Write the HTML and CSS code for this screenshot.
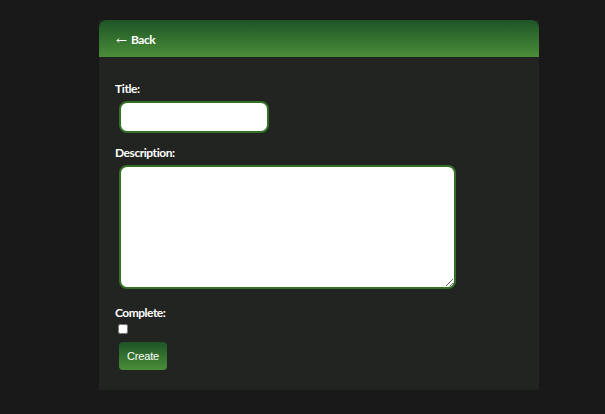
FILE: index.html
```html
<!DOCTYPE html>
<html lang="en">
<head>
<meta charset="utf-8">
<title>Create task</title>
<link rel="stylesheet" href="styles.css">
</head>
<body>
<main class="card">
  <header class="card-header"><a class="back" href="#"><svg class="arrow" viewBox="0 0 11 8"><path d="M1 4.5H10.5M3 2.5L1 4.5L3 6.5"/></svg><span class="back-text">Back</span></a></header>
  <form class="form">
    <label class="label label-title" for="title">Title:</label>
    <input class="field" id="title" type="text">
    <label class="label label-description" for="description">Description:</label>
    <textarea class="field area" id="description"></textarea>
    <label class="label label-complete" for="complete">Complete:</label>
    <input class="check" id="complete" type="checkbox">
    <button class="create" type="button">Create</button>
  </form>
</main>
</body>
</html>
```
FILE: styles.css
```css
* { box-sizing: border-box; }
body {
  margin: 0;
  padding-top: 20px;
  background: #191919;
  color: #fff;
  font: bold 12px/16px Lato, sans-serif;
}
.card {
  width: 440px;
  height: 370px;
  margin-left: 99px;
  background: #222421;
}
.card-header {
  height: 37px;
  padding: 12px 16px 0 17px;
  border-radius: 8px 8px 0 0;
  background: linear-gradient(#1e5426, #4a8e39);
}
.back {
  display: flex;
  align-items: center;
  gap: 4px;
  width: max-content;
  color: #fff;
  text-decoration: none;
}
.arrow {
  width: 11px;
  height: 8px;
  fill: none;
  stroke: #fff;
  stroke-width: 1;
}
.back-text { letter-spacing: -0.5px; }
.form {
  display: flex;
  flex-direction: column;
  align-items: flex-start;
  padding: 24px 16px 0;
}
.label { height: 16px; }
.label-title { letter-spacing: -0.4px; }
.label-description { margin-top: 12px; letter-spacing: -0.45px; }
.label-complete { margin-top: 16px; letter-spacing: -0.5px; }
.field {
  width: 150px;
  height: 32px;
  margin: 4px 4px 0;
  padding: 6px;
  border: 2px solid #357029;
  border-radius: 8px;
  outline: 0;
  background: #fff;
}
.area {
  width: 337px;
  height: 124px;
  resize: both;
}
.check {
  width: 10px;
  height: 10px;
  margin: 3px 3px 0;
}
.create {
  width: 48px;
  height: 28px;
  margin: 8px 4px 0;
  padding: 0;
  border: 0;
  border-radius: 4px;
  background: linear-gradient(#1e5426, #4a8e39);
  color: #fff;
  font: 11px "Liberation Sans", sans-serif;
  letter-spacing: -0.15px;
}
```
